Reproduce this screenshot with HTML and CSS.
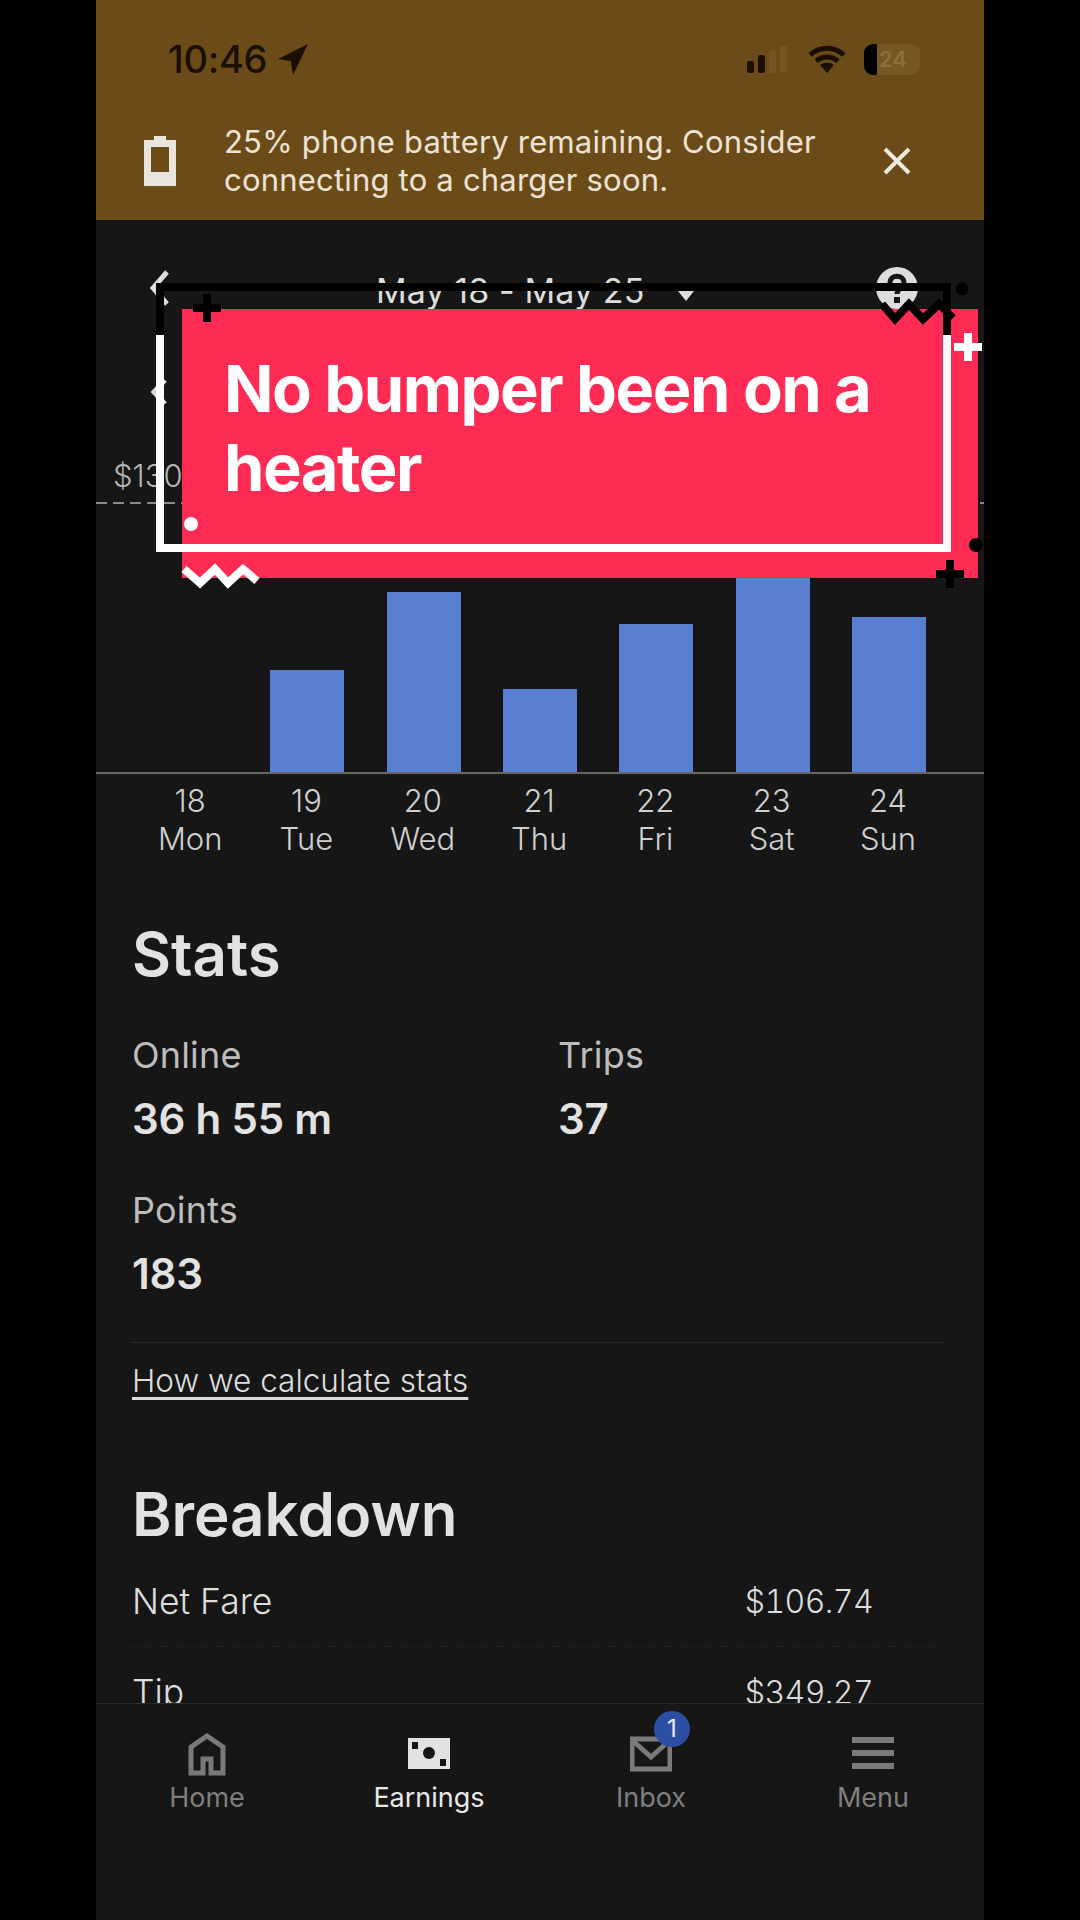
FILE: index.html
```html
<!DOCTYPE html>
<html lang="en">

<head>
    <meta charset="UTF-8">
    <title>Earnings</title>
    <link rel="stylesheet" href="styles.css">
</head>

<body>
    <div class="phone">
        <div class="banner">
            <div class="status">
                <span class="time">10:46</span>
                <svg class="arrow" width="32" height="32" viewBox="0 0 30 30"><path d="M29 1 1 15l12 2 2 13z" fill="#1a0f00"/></svg>
                <span class="status-space"></span>
                <svg class="signal" width="41" height="27" viewBox="0 0 41 27">
                    <rect x="0" y="15" width="7" height="12" rx="2" fill="#1a0f00"/>
                    <rect x="11" y="9" width="7" height="18" rx="2" fill="#1a0f00"/>
                    <rect x="22" y="4" width="7" height="23" rx="2" fill="#75581f"/>
                    <rect x="33" y="0" width="7" height="27" rx="2" fill="#75581f"/>
                </svg>
                <svg class="wifi" width="40" height="28" viewBox="0 0 40 28">
                    <path d="M3 10c10-9 24-9 34 0M9 16c7-5 15-5 22 0" fill="none" stroke="#1a0f00" stroke-width="5"/>
                    <path d="M13 20c4-3 10-3 14 0l-7 8z" fill="#1a0f00"/>
                </svg>
                <div class="battery"><span class="battery-level"></span><span class="battery-num">24</span></div>
            </div>
            <div class="notice">
                <svg class="notice-icon" width="32" height="50" viewBox="0 0 32 50">
                    <path d="M10 0h12v4h10v46H0V4h10z" fill="#e9e5de"/>
                    <rect x="7" y="11" width="18" height="25" fill="#6b4c18"/>
                </svg>
                <div class="notice-text">25% phone battery remaining. Consider<br>connecting to a charger soon.</div>
                <svg class="notice-close" width="28" height="28" viewBox="0 0 28 28"><path d="M2 2l24 24M26 2 2 26" stroke="#f1eadf" stroke-width="4"/></svg>
            </div>
        </div>

        <div class="main">
            <div class="date-row">
                <svg width="20" height="36" viewBox="0 0 20 36"><path d="M17 2 3 18l14 16" fill="none" stroke="#ddd" stroke-width="5"/></svg>
                <div class="date-title">May 18 - May 25 <svg class="caret" width="16" height="10" viewBox="0 0 16 10"><path d="M0 0h16L8 10z" fill="#ddd"/></svg></div>
                <svg width="42" height="42" viewBox="0 0 42 42">
                    <circle cx="21" cy="21" r="21" fill="#ddd"/>
                    <path d="M14 16c0-9 14-9 14 0 0 5-7 5-7 11" fill="none" stroke="#161616" stroke-width="5"/>
                    <rect x="18" y="30" width="6" height="6" fill="#161616"/>
                </svg>
            </div>
            <div class="week-row">
                <svg width="20" height="28" viewBox="0 0 20 28"><path d="M15 2 4 14l11 12" fill="none" stroke="#ddd" stroke-width="5"/></svg>
            </div>

            <div class="goal"><span>$130</span></div>
            <div class="goal-line"></div>
            <div class="bars">
                <div class="bar-col"></div>
                <div class="bar-col"><div class="bar" style="height:102px"></div></div>
                <div class="bar-col"><div class="bar" style="height:180px"></div></div>
                <div class="bar-col"><div class="bar" style="height:83px"></div></div>
                <div class="bar-col"><div class="bar" style="height:148px"></div></div>
                <div class="bar-col"><div class="bar" style="height:210px"></div></div>
                <div class="bar-col"><div class="bar" style="height:155px"></div></div>
            </div>
            <div class="days">
                <div>18<br>Mon</div>
                <div>19<br>Tue</div>
                <div>20<br>Wed</div>
                <div>21<br>Thu</div>
                <div>22<br>Fri</div>
                <div>23<br>Sat</div>
                <div>24<br>Sun</div>
            </div>

            <div class="section">
                <h2 class="stats-title">Stats</h2>
                <div class="stats">
                    <div>
                        <div class="stat-label">Online</div>
                        <div class="stat-value">36 h 55 m</div>
                    </div>
                    <div>
                        <div class="stat-label">Trips</div>
                        <div class="stat-value">37</div>
                    </div>
                    <div>
                        <div class="stat-label">Points</div>
                        <div class="stat-value">183</div>
                    </div>
                </div>
                <hr class="divider">
                <a class="stats-link" href="#">How we calculate stats</a>
                <h2 class="breakdown-title">Breakdown</h2>
                <div class="line-item dotted"><span>Net Fare</span><span class="amount">$106.74</span></div>
                <div class="line-item"><span>Tip</span><span class="amount">$349.27</span></div>
            </div>
        </div>

        <div class="tabs">
            <div class="tab">
                <svg width="40" height="44" viewBox="0 0 40 44"><path d="M4 41V15L20 4l16 11v26H24V27h-8v14z" fill="none" stroke="#7a7a7a" stroke-width="5"/></svg>
                <span>Home</span>
            </div>
            <div class="tab active">
                <svg width="42" height="44" viewBox="0 0 42 44">
                    <rect x="0" y="6" width="42" height="31" fill="#e2e2e2"/>
                    <circle cx="21" cy="21" r="6" fill="#161616"/>
                    <rect x="4" y="10" width="6" height="7" fill="#161616"/>
                    <rect x="32" y="27" width="6" height="7" fill="#161616"/>
                </svg>
                <span>Earnings</span>
            </div>
            <div class="tab">
                <div class="inbox-icon">
                    <svg width="42" height="44" viewBox="0 0 42 44">
                        <rect x="2" y="7" width="38" height="30" fill="none" stroke="#7a7a7a" stroke-width="5"/>
                        <path d="M3 9l18 16L39 9" fill="none" stroke="#7a7a7a" stroke-width="5"/>
                    </svg>
                    <span class="badge">1</span>
                </div>
                <span>Inbox</span>
            </div>
            <div class="tab">
                <svg width="42" height="44" viewBox="0 0 42 44">
                    <rect y="5" width="42" height="6" fill="#7a7a7a"/>
                    <rect y="18" width="42" height="6" fill="#7a7a7a"/>
                    <rect y="31" width="42" height="6" fill="#7a7a7a"/>
                </svg>
                <span>Menu</span>
            </div>
        </div>

        <div class="sticker">
            <div class="sticker-text">No bumper been on a<br>heater</div>
        </div>
        <div class="sticker-frame"></div>
        <svg class="sticker-decor" width="888" height="620" viewBox="0 0 888 620">
            <path d="M97 308h28M111 294v28" stroke="#000" stroke-width="8"/>
            <path d="M858 347h28M872 333v28" stroke="#fff" stroke-width="8"/>
            <path d="M840 574h28M854 560v28" stroke="#000" stroke-width="8"/>
            <circle cx="95" cy="524" r="7" fill="#fff"/>
            <circle cx="866" cy="289" r="6.5" fill="#000"/>
            <circle cx="880" cy="545" r="7" fill="#000"/>
            <path d="M88 569l16 14 15-14 13 14 15-14 14 12" fill="none" stroke="#fff" stroke-width="8"/>
            <path d="M786 304l13 15 14-15 14 15 16-15 14 14" fill="none" stroke="#000" stroke-width="8"/>
        </svg>
    </div>
</body>

</html>
```

FILE: styles.css
```css
* {
    box-sizing: border-box;
}

body {
    margin: 0;
    background-color: #000;
    font-family: Inter, "Liberation Sans", sans-serif;
}

.phone {
    position: relative;
    display: flex;
    flex-direction: column;
    width: 888px;
    height: 1920px;
    margin: 0 auto;
    overflow: hidden;
    background-color: #161616;
}

/* top banner */
.banner {
    height: 220px;
    flex-shrink: 0;
    background-color: #6b4c18;
}

.status {
    display: flex;
    align-items: center;
    height: 118px;
    padding-left: 72px;
    padding-right: 64px;
}

.time {
    font-size: 38px;
    font-weight: 500;
    letter-spacing: -0.3px;
    color: #1a0f00;
}

.arrow {
    margin-left: 10px;
}

.status-space {
    flex: 1;
}

.wifi {
    margin-left: 19px;
}

.battery {
    position: relative;
    width: 56px;
    height: 31px;
    margin-left: 17px;
    border-radius: 9px;
    overflow: hidden;
    background-color: #755821;
}

.battery-level {
    display: block;
    width: 13px;
    height: 31px;
    background-color: #000;
}

.battery-num {
    position: absolute;
    top: 2px;
    left: 15px;
    font-size: 22px;
    font-weight: 600;
    color: #8a7040;
}

.notice {
    display: flex;
    align-items: center;
    height: 86px;
    padding-left: 48px;
    padding-right: 73px;
}

.notice-icon {
    flex-shrink: 0;
    margin-right: 48px;
}

.notice-text {
    flex: 1;
    font-size: 31px;
    line-height: 38px;
    letter-spacing: 0.2px;
    color: #ece3d6;
}

/* date and chart */
.main {
    flex: 1;
    min-height: 0;
    overflow: hidden;
    color: #ddd;
}

.date-row {
    display: flex;
    align-items: center;
    justify-content: space-between;
    height: 136px;
    padding-left: 54px;
    padding-right: 66px;
}

.date-title {
    margin-left: 24px;
    margin-top: 4px;
    font-size: 34px;
    font-weight: 400;
    letter-spacing: 0.1px;
    white-space: nowrap;
}

.caret {
    margin-left: 24px;
    vertical-align: 2px;
}

.week-row {
    display: flex;
    align-items: center;
    height: 72px;
    padding-left: 54px;
}

.goal {
    display: flex;
    align-items: flex-end;
    height: 74px;
    padding-left: 17px;
    padding-bottom: 8px;
    font-size: 31px;
    font-weight: 300;
    color: #b5b5b5;
}

.goal-line {
    height: 2px;
    background-image: repeating-linear-gradient(90deg, #8a8a8a 0, #8a8a8a 11px, transparent 11px, transparent 17px);
}

.bars,
.days {
    display: grid;
    grid-template-columns: repeat(7, 116.3px);
    padding-left: 37px;
}

.bars {
    height: 270px;
    border-bottom: 2px solid #666;
}

.bar-col {
    display: flex;
    align-items: flex-end;
    justify-content: center;
}

.bar {
    width: 74px;
    background-color: #5a7fd2;
}

.days {
    padding-top: 8px;
    padding-left: 36px;
    font-size: 31px;
    font-weight: 300;
    line-height: 38px;
    text-align: center;
    color: #cfcfcf;
}

/* stats */
.section {
    padding-left: 36px;
    padding-right: 40px;
}

.stats-title,
.breakdown-title {
    margin: 0;
    font-size: 60px;
    font-weight: 600;
    line-height: 72px;
    color: #e2e2e2;
}

.stats-title {
    margin-top: 60px;
}

.breakdown-title {
    margin-top: 77px;
}

.stats {
    display: grid;
    grid-template-columns: 426px 1fr;
    row-gap: 47px;
    margin-top: 45px;
}

.stat-label {
    font-size: 36px;
    font-weight: 400;
    line-height: 40px;
    letter-spacing: 0.2px;
    color: #bdbdbd;
}

.stat-value {
    margin-top: 20px;
    font-size: 42px;
    font-weight: 600;
    line-height: 48px;
    letter-spacing: -0.2px;
    color: #e2e2e2;
}

.divider {
    height: 1px;
    margin: 44px 0 18px;
    border: 0;
    background-color: #2a2a2a;
}

.stats-link {
    display: inline-block;
    font-size: 31.5px;
    font-weight: 300;
    line-height: 40px;
    color: #ddd;
    text-decoration: underline;
    text-underline-offset: 5px;
}

.line-item {
    display: flex;
    justify-content: space-between;
    margin-top: 32px;
    padding-right: 71px;
    font-size: 35.5px;
    font-weight: 300;
    line-height: 40px;
    color: #ddd;
}

.amount {
    font-size: 32px;
    font-variant-numeric: tabular-nums;
    letter-spacing: -0.6px;
}

.dotted {
    padding-bottom: 25px;
    background-image: repeating-linear-gradient(90deg, #222 0, #222 8px, transparent 8px, transparent 14px);
    background-size: 100% 1px;
    background-position: left bottom;
    background-repeat: no-repeat;
}

.dotted + .line-item {
    margin-top: 26px;
}

/* bottom tabs */
.tabs {
    display: grid;
    grid-template-columns: repeat(4, 1fr);
    flex-shrink: 0;
    height: 217px;
    padding-top: 28px;
    border-top: 1px solid #2a2a2a;
    background-color: #161616;
}

.tab {
    display: flex;
    flex-direction: column;
    align-items: center;
    font-size: 27px;
    line-height: 36px;
    color: #7f7f7f;
}

.tab svg {
    display: block;
    margin-bottom: 4px;
}

.tab.active {
    color: #e8e8e8;
}

.inbox-icon {
    position: relative;
}

.badge {
    position: absolute;
    top: -21px;
    left: 24px;
    width: 36px;
    height: 36px;
    border-radius: 50%;
    background-color: #2d4fa3;
    color: #e8eeff;
    font-size: 24px;
    line-height: 36px;
    text-align: center;
}

/* red caption sticker over the page */
.sticker {
    position: absolute;
    left: 86px;
    top: 309px;
    width: 796px;
    height: 269px;
    padding-left: 42px;
    padding-top: 40px;
    background-color: #fe2c55;
}

.sticker-text {
    font-family: Inter, "Liberation Sans", sans-serif;
    font-size: 65px;
    font-weight: 700;
    line-height: 79px;
    letter-spacing: -1.5px;
    color: #fff;
}

.sticker-frame {
    position: absolute;
    left: 60px;
    top: 283px;
    width: 795px;
    height: 269px;
    border: 8px solid #fff;
}

.sticker-frame::before {
    content: "";
    position: absolute;
    left: -8px;
    right: -8px;
    top: -8px;
    height: 44px;
    border: 8px solid #000;
    border-bottom: 0;
}

.sticker-decor {
    position: absolute;
    left: 0;
    top: 0;
}
```
